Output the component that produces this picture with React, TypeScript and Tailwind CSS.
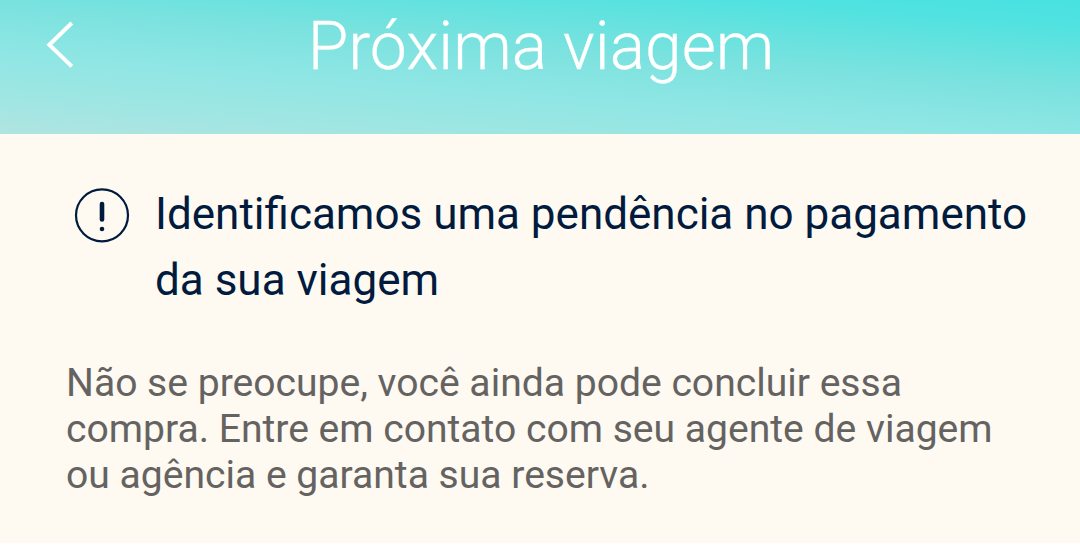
export default function App() {
  return (
    <div className="flex h-[552px] w-[1080px] flex-col overflow-hidden bg-[#fef9f1] font-[Roboto,sans-serif]">
      <header className="grid h-[134px] shrink-0 grid-cols-[120px_1fr_120px] items-start bg-[linear-gradient(184.5deg,#48e2e1_0%,#50e2e0_12%,#65e2df_26%,#7ce2df_42%,#8ee6e4_62%,#9de6e3_81%,#b0e4e1_100%)] text-white">
        <button aria-label="Voltar" className="pl-[46px] pt-[21px]">
          <svg width="28" height="48" viewBox="0 0 28 48" fill="none" stroke="currentColor" strokeWidth="4"><path d="M25.8 2 3.3 23.7 25.8 45.4" /></svg>
        </button>
        <h1 className="pt-[11px] pl-[2px] text-center text-[66px] leading-[72px] font-light whitespace-nowrap [-webkit-text-stroke:0.3px_white]">Próxima viagem</h1>
      </header>
      <main className="h-[409px] px-[66px] pt-[47px]">
        <section className="flex text-[#001b3e]">
          <svg className="mt-[6px] ml-[8px] shrink-0" width="56" height="56" viewBox="0 0 56 56" fill="none" stroke="currentColor" strokeWidth="2.2" strokeLinecap="round"><circle cx="28" cy="28.3" r="26" /><path d="M28 17v15.5" strokeWidth="4.6" /><circle cx="28" cy="42" r="2.3" fill="currentColor" stroke="none" /></svg>
          <h2 className="ml-[25px] text-[44px] leading-[66px] whitespace-nowrap">Identificamos uma pendência no pagamento<br />da sua viagem</h2>
        </section>
        <p className="mt-[47px] text-[39.1px] leading-[46px] whitespace-nowrap text-[#646361]">Não se preocupe, você ainda pode concluir essa<br />compra. Entre em contato com seu agente de viagem<br />ou agência e garanta sua reserva.</p>
      </main>
      <div className="flex-1 bg-white" />
    </div>
  );
}
